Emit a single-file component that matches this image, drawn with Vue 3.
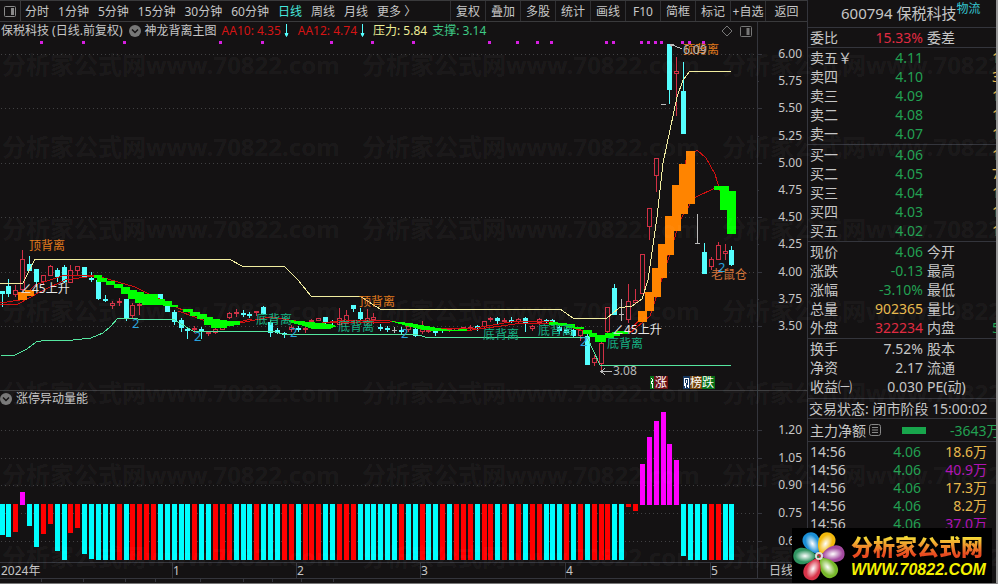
<script setup>
import { ref } from 'vue';

const periods = ['分时', '1分钟', '5分钟', '15分钟', '30分钟', '60分钟', '日线', '周线', '月线', '更多 〉'];
const activePeriod = ref('日线');
const tools = ['复权', '叠加', '多股', '统计', '画线', 'F10', '简框', '标记', '+自选', '返回'];

const sells = [
    ['卖五￥', '4.11', '1'],
    ['卖四', '4.10', '3'],
    ['卖三', '4.09', '1'],
    ['卖二', '4.08', '1'],
    ['卖一', '4.07', '1'],
];
const buys = [
    ['买一', '4.06', '1'],
    ['买二', '4.05', '7'],
    ['买三', '4.04', '1'],
    ['买四', '4.03', '1'],
    ['买五', '4.02', '1'],
];
const quotes = [
    ['现价', '4.06', 'down', '今开', ''],
    ['涨跌', '-0.13', 'down', '最高', ''],
    ['涨幅', '-3.10%', 'down', '最低', ''],
    ['总量', '902365', 'gold', '量比', ''],
    ['外盘', '322234', 'up', '内盘', '5'],
];
const basics = [
    ['换手', '7.52%', '股本'],
    ['净资', '2.17', '流通'],
    ['收益㈠', '0.030', 'PE(动)'],
];
const ticks = [
    ['18.6万', 'gold'],
    ['40.9万', 'purple'],
    ['17.3万', 'gold'],
    ['8.2万', 'gold'],
    ['37.0万', 'purple'],
];

const step = 6.885;
const center = (i) => Math.round(1.6 + i * step);

// index, colour (c = falling, r = rising, g = flat), high, body top, body bottom, low
const candles = [
    [0, 'c', 291, 291, 294, 307], [1, 'c', 279, 286, 294, 297], [2, 'r', 285, 290, 295, 297],
    [3, 'r', 250, 259, 290, 291], [4, 'c', 256, 264, 271, 271], [5, 'c', 269, 269, 282, 287],
    [6, 'r', 275, 275, 282, 284], [7, 'r', 265, 266, 276, 276], [8, 'c', 268, 270, 277, 282],
    [9, 'c', 265, 267, 282, 283], [10, 'r', 265, 270, 283, 283], [11, 'r', 266, 266, 271, 276],
    [12, 'c', 267, 267, 278, 278], [13, 'c', 272, 278, 280, 282], [14, 'c', 280, 280, 299, 300],
    [15, 'c', 295, 299, 301, 302], [16, 'r', 301, 303, 306, 309], [17, 'r', 298, 301, 303, 306],
    [18, 'c', 299, 299, 319, 321], [19, 'r', 303, 305, 316, 318], [20, 'r', 302, 304, 306, 315],
    [23, 'c', 294, 294, 300, 300], [24, 'c', 303, 304, 312, 312], [25, 'c', 310, 312, 322, 325],
    [26, 'c', 318, 320, 328, 332], [27, 'c', 328, 329, 331, 339], [28, 'r', 326, 328, 330, 333],
    [29, 'c', 327, 329, 331, 339], [30, 'r', 331, 332, 334, 336], [31, 'r', 327, 329, 333, 334],
    [32, 'r', 325, 326, 330, 330], [33, 'r', 312, 313, 318, 319], [34, 'r', 309, 312, 314, 317],
    [35, 'c', 310, 313, 315, 317], [36, 'c', 312, 314, 316, 318], [37, 'r', 311, 311, 313, 316],
    [38, 'c', 306, 307, 314, 315], [39, 'c', 320, 322, 333, 337], [40, 'c', 328, 330, 333, 334],
    [41, 'c', 332, 333, 335, 338], [42, 'r', 325, 327, 330, 332], [43, 'c', 326, 328, 330, 332],
    [44, 'r', 327, 328, 330, 333], [45, 'r', 319, 320, 322, 323], [46, 'r', 318, 318, 321, 321],
    [47, 'c', 317, 317, 322, 325], [48, 'c', 320, 321, 323, 325], [49, 'r', 308, 318, 325, 325],
    [50, 'r', 310, 315, 324, 324], [51, 'c', 305, 305, 309, 312], [52, 'c', 308, 312, 319, 320],
    [53, 'r', 309, 318, 323, 325], [54, 'r', 313, 317, 320, 324], [55, 'c', 324, 327, 329, 331],
    [56, 'c', 326, 328, 330, 332], [57, 'g', 327, 330, 331, 333], [58, 'c', 327, 330, 332, 335],
    [59, 'r', 324, 326, 330, 332], [60, 'c', 328, 329, 336, 337], [61, 'r', 321, 328, 332, 334],
    [62, 'r', 329, 330, 332, 333], [63, 'c', 328, 331, 333, 336], [64, 'c', 328, 329, 331, 333],
    [65, 'r', 329, 329, 331, 332], [66, 'r', 328, 328, 331, 331], [67, 'r', 327, 327, 330, 330],
    [68, 'r', 325, 327, 329, 330], [69, 'c', 325, 326, 328, 331], [70, 'r', 321, 321, 327, 329],
    [71, 'r', 317, 318, 320, 322], [72, 'c', 317, 318, 321, 325], [73, 'r', 318, 320, 322, 323],
    [74, 'c', 317, 320, 322, 323], [75, 'r', 318, 319, 322, 323], [76, 'c', 317, 318, 324, 332],
    [77, 'r', 325, 326, 329, 331], [78, 'r', 318, 319, 323, 325], [79, 'c', 319, 320, 321, 323],
    [80, 'c', 319, 320, 323, 325], [81, 'c', 326, 327, 331, 334], [82, 'c', 327, 329, 333, 335],
    [83, 'c', 329, 330, 336, 337], [84, 'r', 329, 330, 336, 341], [85, 'c', 334, 336, 365, 365],
    [86, 'r', 355, 358, 363, 366], [87, 'r', 342, 343, 364, 371], [88, 'r', 307, 307, 332, 334],
    [89, 'c', 284, 288, 315, 315], [90, 'g', 299, 314, 315, 321], [91, 'r', 284, 301, 320, 323],
    [92, 'r', 289, 300, 303, 304], [93, 'r', 254, 254, 294, 294], [94, 'r', 208, 208, 227, 240],
    [95, 'r', 158, 158, 176, 192], [96, 'g', 104, 104, 105, 105], [97, 'c', 44, 44, 90, 104],
    [98, 'r', 57, 71, 74, 116], [99, 'c', 62, 91, 134, 134], [101, 'g', 214, 243, 244, 244],
    [102, 'c', 243, 252, 274, 274], [103, 'r', 257, 259, 267, 270], [104, 'r', 242, 245, 260, 260],
    [105, 'r', 244, 251, 254, 260], [106, 'c', 246, 250, 265, 266],
].map(([i, type, high, top, bottom, low]) => ({ x: center(i), type, high, top, bottom, low }));

// x, y, width, height
const falling = [
    [94, 275, 8, 3], [97, 278, 10, 4], [106, 281, 9, 4], [114, 284, 9, 4], [121, 287, 9, 7],
    [128, 290, 9, 9], [135, 292, 9, 11], [142, 294, 16, 11], [155, 299, 10, 6], [163, 301, 9, 5],
    [170, 305, 8, 2], [183, 309, 10, 3], [190, 312, 10, 4], [197, 314, 10, 5], [204, 317, 9, 8],
    [211, 319, 9, 9], [218, 320, 9, 8], [225, 321, 9, 5], [232, 321, 8, 4],
    [549, 322, 9, 3], [558, 323, 9, 3], [566, 324, 9, 4], [574, 327, 10, 2], [583, 330, 9, 4],
    [589, 333, 8, 4], [595, 335, 11, 7], [605, 333, 9, 5], [612, 332, 8, 4], [617, 331, 11, 3],
    [714, 186, 15, 4], [720, 186, 9, 24], [727, 191, 9, 43],
];
const rising = [
    [18, 292, 9, 8], [25, 290, 9, 6], [638, 311, 9, 11], [645, 292, 9, 19], [652, 268, 9, 29],
    [658, 244, 9, 34], [665, 216, 9, 39], [672, 185, 9, 46], [679, 164, 9, 50], [686, 151, 9, 53],
];

const dots = [41, 83, 124, 220, 262, 331, 372, 413, 489, 517, 537, 551, 606, 613, 641, 648, 655, 661, 682, 689, 703];
const prices = ['6.00', '5.75', '5.50', '5.25', '5.00', '4.75', '4.50', '4.25', '4.00', '3.75', '3.50']
    .map((label, i) => ({ label, y: Math.round(54 + i * 27.2), major: i % 2 === 0 }));
const levels = [['1.20', 430], ['1.05', 458], ['0.90', 485], ['0.75', 513], ['0.60', 541]];

const marks = [
    ['顶背离', 29, 250, 'top'], ['顶背离', 359, 306, 'top'], ['顶背离', 683, 54, 'top'],
    ['底背离', 256, 324, 'low'], ['底背离', 338, 331, 'low'], ['底背离', 483, 339, 'low'],
    ['底背离', 538, 335, 'low'], ['底背离', 607, 348, 'low'], ['老鼠仓', 711, 279, 'rat'],
    ['∠45上升', 20, 293, 'rise'], ['∠45上升', 612, 334, 'rise'],
    ['2', 132, 328, 'two'], ['2', 194, 341, 'two'], ['2', 290, 337, 'two'],
    ['2', 401, 338, 'two'], ['2', 580, 346, 'two'], ['2', 718, 272, 'two'],
    ['6.09', 683, 54, 'grey'], ['3.08', 613, 375, 'grey'],
];

const pattern = 'ccrmccrrccrrcccccrcrrrrcccccrccrrrcccrcccrrcrrrc'
    + 'crrrccccccrccrccrcrrrcrrcrcrcrrcccrcrcrrrccrrmmmmmmccccrrcc';
const heights = {
    0: 31, 1: 33, 2: 28, 4: 22, 5: 43, 6: 30, 7: 20, 8: 47, 10: 29, 11: 24, 12: 50, 13: 55,
    91: 3, 92: 7, 99: 52,
};
const peaks = { 3: 492, 93: 464, 94: 437, 95: 421, 96: 412, 97: 444, 98: 460 };
const bars = [...pattern].map((type, i) => {
    const y = peaks[i] ?? 504;
    return { x: center(i) - 2, y, height: peaks[i] ? 505 - y : heights[i] ?? 56, type };
});

const months = [['1', 173], ['2', 297], ['3', 421], ['4', 566], ['5', 711]];
const petals = [
    [-28, '#1b8fd6'], [28, '#f2b90c'], [82, '#a44aa0'], [142, '#77b82a'], [205, '#d83349'], [270, '#2f9460'],
];
</script>

<template>
    <div class="page">
        <main class="chart">
            <nav class="toolbar">
                <button class="layout-button" aria-label="布局">
                    <svg viewBox="0 0 12 11" width="12" height="11">
                        <rect x="0.5" y="0.5" width="11" height="10" rx="1" fill="none" stroke="#8a8a8a" />
                        <rect x="7" y="2" width="3" height="7" fill="#8a8a8a" />
                    </svg>
                </button>
                <div class="periods">
                    <button
                        v-for="period in periods"
                        :key="period"
                        :class="{ active: period === activePeriod }"
                        @click="activePeriod = period"
                    >{{ period }}</button>
                </div>
                <div class="tools">
                    <button v-for="tool in tools" :key="tool">{{ tool }}</button>
                </div>
            </nav>

            <header class="legend">
                <span>保税科技 (日线.前复权)</span>
                <svg class="chevron" viewBox="0 0 12 12" width="12" height="12">
                    <circle cx="6" cy="6" r="6" fill="#777" />
                    <path d="M3 4.5l3 3 3-3" fill="none" stroke="#151314" stroke-width="1.5" />
                </svg>
                <span>神龙背离主图</span>
                <span class="average">AA10: 4.35<svg viewBox="0 0 5 13" width="5" height="13"><path d="M2.5 0v10M1 9.5h3l-1.5 3z" fill="#5ff" stroke="#5ff" /></svg></span>
                <span class="average second">AA12: 4.74<svg viewBox="0 0 5 13" width="5" height="13"><path d="M2.5 0v10M1 9.5h3l-1.5 3z" fill="#5ff" stroke="#5ff" /></svg></span>
                <span class="pressure">压力: 5.84</span>
                <span class="support">支撑: 3.14</span>
                <div class="legend-icons">
                    <svg viewBox="0 0 32 12" width="32" height="12" fill="none" stroke="#777">
                        <path d="M6 1l5 5-5 5-5-5z" />
                        <rect x="19.5" y="1.5" width="11" height="10" rx="1" />
                        <path d="M27 3v7" stroke-width="3" />
                    </svg>
                </div>
                <div class="axis-gap"></div>
            </header>

            <svg class="plot" viewBox="0 39 807 351">
                <g class="grid">
                    <template v-for="price in prices" :key="price.label">
                        <line v-if="price.major" class="dotted" x1="1" x2="757" :y1="price.y + 0.5" :y2="price.y + 0.5" />
                        <line x1="757" :x2="price.major ? 762 : 759" :y1="price.y + 0.5" :y2="price.y + 0.5" />
                        <text class="axis" x="802" :y="price.y + 4">{{ price.label }}</text>
                    </template>
                    <line x1="757.5" x2="757.5" y1="39" y2="391" />
                </g>
                <rect v-for="x in dots" :key="x" :x="x - 1" y="41" width="3" height="3" fill="#d61fe0" />

                <g class="candles">
                    <g v-for="candle in candles" :key="candle.x" :class="candle.type">
                        <line :x1="candle.x + 0.5" :x2="candle.x + 0.5" :y1="candle.high" :y2="candle.top" />
                        <line :x1="candle.x + 0.5" :x2="candle.x + 0.5" :y1="candle.bottom" :y2="candle.low" />
                        <rect
                            v-if="candle.type === 'r'"
                            :x="candle.x - 1.5"
                            :y="candle.top + 0.5"
                            width="4"
                            :height="Math.max(candle.bottom - candle.top - 1, 1)"
                        />
                        <rect v-else :x="candle.x - 2" :y="candle.top" width="5" :height="candle.bottom - candle.top" />
                    </g>
                </g>

                <g class="curves">
                    <path class="yellow" d="M0 283H23L35 259H229L242 266H284L298 280L311 296H360L372 304L380 309H560L573 318H607L619 308L632 306L642 299L648 280L657 217L663 163L670 130L677 97L683 80L690 71H731" />
                    <path class="mint" d="M1 355H15L27 349L36 342L41 341L73 340L91 338L103 333L110 327L118 318H133L138 319H173L193 331H272L283 334H415L425 337H587L600 365H731" />
                    <path class="red" d="M0 303L20 300L35 285L65 275L94 275L135 287L178 308L215 323L240 323L270 317L315 324L345 320L390 321L430 328L470 329L510 322L550 321L583 331L597 338L627 332L645 315L661 280L675 225L686 160L697 150L706 158L715 174L725 208" />
                    <path class="red" d="M0 304L18 304L40 292L65 280L94 276M178 311L220 326L252 319M330 322L390 322M465 331L515 324L552 323M630 333L650 316L665 270L680 220L694 198L715 188" />
                </g>

                <g fill="#0f0">
                    <rect v-for="([x, y, width, height], i) in falling" :key="i" :x="x" :y="y" :width="width" :height="height" />
                    <path d="M289 320L310 322L330 324L337 326L330 329H312L300 325L289 322zM390 321L410 323L438 328L450 330L467 329V331H437L423 330L407 326z" />
                </g>
                <g fill="#ff8400">
                    <rect v-for="([x, y, width, height], i) in rising" :key="i" :x="x" :y="y" :width="width" :height="height" />
                </g>

                <path d="M682 49L670 44M674 44L670 44L672 47M612 371.5H601M605 368L601 371.5L605 375" fill="none" stroke="#bbb" />
                <text v-for="([label, x, y, kind], i) in marks" :key="i" :class="['mark', kind]" :x="x" :y="y">{{ label }}</text>

                <rect x="650" y="376" width="4" height="13" fill="#087018" />
                <rect x="654" y="376" width="14" height="13" fill="#6b1014" />
                <path d="M651 378l2 2-2 3 2 1-1 4" fill="none" stroke="#fff" />
                <text class="badge" x="655" y="387">涨</text>
                <rect x="683" y="376" width="7" height="13" fill="#163760" />
                <rect x="690" y="376" width="12" height="13" fill="#76430b" />
                <rect x="702" y="376" width="13" height="13" fill="#087018" />
                <path d="M684.5 386V378H688.5V386M686.5 380L685 388M687 385l2 3" fill="none" stroke="#fff" />
                <text class="badge" x="690" y="387">榜跌</text>
            </svg>

            <header class="legend volume-legend">
                <svg class="chevron" viewBox="0 0 12 12" width="12" height="12">
                    <circle cx="6" cy="6" r="6" fill="#777" />
                    <path d="M3 4.5l3 3 3-3" fill="none" stroke="#151314" stroke-width="1.5" />
                </svg>
                <span>涨停异动量能</span>
                <div class="axis-gap"></div>
            </header>

            <svg class="plot" viewBox="0 406 807 156">
                <g class="grid">
                    <template v-for="[label, y] in levels" :key="label">
                        <line class="dotted" x1="1" x2="757" :y1="y + 0.5" :y2="y + 0.5" />
                        <line x1="757" x2="762" :y1="y + 0.5" :y2="y + 0.5" />
                        <text class="axis" x="802" :y="y + 4">{{ label }}</text>
                    </template>
                    <line x1="757.5" x2="757.5" y1="406" y2="562" />
                </g>
                <rect v-for="bar in bars" :key="bar.x" :class="['bar', bar.type]" :x="bar.x" :y="bar.y" width="5" :height="bar.height" />
            </svg>

            <svg class="plot" viewBox="0 562 807 21">
                <g class="grid">
                    <line x1="0" x2="807" y1="562.5" y2="562.5" />
                    <line x1="0" x2="807" y1="578.5" y2="578.5" />
                    <line x1="757.5" x2="757.5" y1="562" y2="579" />
                    <line v-for="x in [41, 83, 125, 155, 200, 243, 272, 301, 333]" :key="x" :x1="x" :x2="x" y1="579" y2="582" />
                    <line v-for="[label, x] in months" :key="label" :x1="x - 0.5" :x2="x - 0.5" y1="562" y2="579" />
                </g>
                <text class="month" x="1" y="575">2024年</text>
                <text v-for="[label, x] in months" :key="label" class="month" :x="x" :y="575">{{ label }}</text>
                <text class="month" x="769" y="575">日线</text>
            </svg>
        </main>

        <aside class="side">
            <h1>600794 保税科技<small>物流</small></h1>
            <section class="group single">
                <div class="row"><span>委比</span><span class="value up">15.33%</span><span>委差</span></div>
            </section>
            <section v-for="(orders, i) in [sells, buys]" :key="i" class="group">
                <div v-for="[label, price, amount] in orders" :key="label" class="row">
                    <span>{{ label }}</span><span class="value down">{{ price }}</span><span></span>
                    <span class="edge gold">{{ amount }}</span>
                </div>
            </section>
            <section class="group">
                <div v-for="[label, value, tone, other, rest] in quotes" :key="label" class="row">
                    <span>{{ label }}</span><span class="value" :class="tone">{{ value }}</span><span>{{ other }}</span>
                    <span class="edge down">{{ rest }}</span>
                </div>
            </section>
            <section class="group basics">
                <div v-for="[label, value, other] in basics" :key="label" class="row">
                    <span>{{ label }}</span><span class="value">{{ value }}</span><span>{{ other }}</span>
                </div>
            </section>
            <p class="status">交易状态: 闭市阶段 15:00:02</p>
            <div class="flow">
                <span>主力净额</span>
                <svg viewBox="0 0 12 12" width="12" height="12" fill="none" stroke="#888">
                    <rect x="0.5" y="0.5" width="11" height="11" rx="2" />
                    <path d="M3 3.5h6M3 6h6M3 8.5h6" />
                </svg>
                <i></i>
                <span class="net down">-3643万</span>
            </div>
            <div class="ticks">
                <div v-for="([amount, tone], i) in ticks" :key="i" class="tick">
                    <span>14:56</span><span class="down">4.06</span><span :class="tone">{{ amount }}</span>
                </div>
            </div>
        </aside>

        <div class="watermark" aria-hidden="true">
            <span v-for="n in 21" :key="n">分析家公式网www.70822.com</span>
        </div>

        <a class="brand" href="#">
            <svg viewBox="-27 -27 54 54" width="54" height="54">
                <defs>
                    <radialGradient id="petal">
                        <stop offset="0" stop-color="#fff" />
                        <stop offset="1" stop-color="#fff" stop-opacity="0" />
                    </radialGradient>
                </defs>
                <g v-for="[angle, color] in petals" :key="angle" :transform="`rotate(${angle})`">
                    <path d="M0 -2C-8 -9 -10 -17 -7 -22C-4 -27 4 -27 7 -22C10 -17 8 -9 0 -2z" :fill="color" />
                    <ellipse cx="0" cy="-14" rx="6" ry="10" fill="url(#petal)" />
                </g>
                <circle r="4" fill="#ddd" />
                <circle r="2" fill="#a33" />
                <circle cx="-1" cy="1" r="1" fill="#284" />
            </svg>
            <span class="brand-text">
                <strong>分析家公式网</strong>
                <em>WWW.70822.COM</em>
            </span>
        </a>
    </div>
</template>

<style>
body {
    margin: 0;
    background: #fff;
}
</style>

<style scoped>
.page {
    position: relative;
    display: grid;
    grid-template-columns: minmax(0, 1fr) 189px;
    margin-right: 4px;
    border-right: 2px solid #999;
    border-bottom: 1px solid #777;
    background: #141213;
    color: #c6c6c6;
    font-family: "Noto Sans", "Noto Sans CJK SC", sans-serif;
    font-size: 12px;
    overflow: hidden;
}

button {
    padding: 0;
    border: 0;
    background: none;
    color: inherit;
    font: inherit;
    white-space: nowrap;
    cursor: pointer;
}

.toolbar {
    display: flex;
    height: 20px;
    border-top: 1px solid #3a3a3c;
    border-bottom: 1px solid #3a3a3c;
}

.layout-button {
    display: flex;
    align-items: center;
    justify-content: center;
    width: 21px;
    border-right: 1px solid #3a3a3c;
}

.periods {
    display: flex;
    flex: 1;
    gap: 9px;
    padding-left: 4px;
}

.periods .active {
    color: #45e6dc;
}

.tools {
    display: flex;
}

.tools button {
    width: 35px;
    border-left: 1px solid #303033;
}

.tools button:last-child {
    width: 42px;
}

.legend {
    display: flex;
    align-items: center;
    height: 17px;
    padding-left: 1px;
    line-height: 17px;
    white-space: nowrap;
}

.chevron {
    margin: 0 4px 0 6px;
}

.average {
    display: flex;
    align-items: center;
    gap: 3px;
    margin-left: 5px;
    color: #d41414;
}

.average.second {
    margin-left: 9px;
}

.pressure {
    margin-left: 8px;
    color: #eeee96;
}

.support {
    margin-left: 5px;
    color: #3ec985;
}

.legend-icons {
    display: flex;
    flex: 1;
    justify-content: flex-end;
    padding-right: 4px;
}

.axis-gap {
    align-self: stretch;
    box-sizing: border-box;
    width: 50px;
    border-left: 1px solid #34353c;
}

.volume-legend {
    height: 15px;
    padding-left: 0;
    border-top: 1px solid #3a3a3c;
    line-height: 15px;
}

.volume-legend .chevron {
    margin-left: 0;
}

.volume-legend .axis-gap {
    margin-left: auto;
}

.plot {
    display: block;
    width: 100%;
    height: auto;
    shape-rendering: crispEdges;
}

.grid line {
    stroke: #34353c;
}

.grid .dotted {
    stroke: #414143;
    stroke-dasharray: 1 3;
}

.axis {
    fill: #c6c6c6;
    text-anchor: end;
}

.month {
    fill: #c6c6c6;
}

.candles .c {
    fill: #5ff;
    stroke: #5ff;
}

.candles .c rect,
.candles .g rect {
    stroke: none;
}

.candles .r {
    fill: #141213;
    stroke: #d03045;
}

.candles .g {
    fill: #bbb;
    stroke: #bbb;
}

.curves path {
    fill: none;
}

.curves .yellow {
    stroke: #f2eda0;
}

.curves .mint {
    stroke: #55e6a0;
}

.curves .red {
    stroke: #d01010;
}

.mark.top {
    fill: #e07a1c;
}

.mark.low {
    fill: #16b184;
}

.mark.rat {
    fill: #d4753a;
}

.mark.rise {
    fill: #e8e8e8;
}

.mark.two {
    fill: #2aa3dd;
    font-size: 13px;
}

.mark.grey {
    fill: #b8b8b8;
}

.badge {
    fill: #fff;
}

.bar.c {
    fill: #0ff;
}

.bar.r {
    fill: #f00;
}

.bar.m {
    fill: #f0f;
}

.side {
    border-left: 1px solid #34353c;
    font-size: 14px;
    overflow: hidden;
    white-space: nowrap;
}

.side h1 {
    display: flex;
    box-sizing: border-box;
    height: 28px;
    margin: 0;
    padding-left: 33px;
    border-bottom: 1px solid #34353c;
    font-size: 15px;
    font-weight: 400;
    line-height: 27px;
}

.side h1 small {
    color: #35c5cf;
    font-size: 12px;
    line-height: 18px;
}

.group {
    padding-bottom: 1px;
    border-bottom: 1px solid #34353c;
}

.group.single {
    padding: 0;
}

.basics {
    padding-bottom: 2px;
}

.row {
    display: grid;
    grid-template-columns: 46px 67px 69px 20px;
    height: 19px;
    padding-left: 2px;
    line-height: 19px;
}

.value {
    text-align: right;
}

.row span:nth-child(3) {
    padding-left: 4px;
}

.up {
    color: #e02b42;
}

.down {
    color: #22a052;
}

.gold {
    color: #e8b94c;
}

.purple {
    color: #b012b5;
}

.status {
    height: 19px;
    margin: 0;
    padding-left: 1px;
    border-bottom: 1px solid #34353c;
    line-height: 19px;
}

.flow {
    display: flex;
    align-items: center;
    height: 22px;
    padding-left: 2px;
    border-bottom: 1px solid #34353c;
}

.flow > * {
    flex-shrink: 0;
}

.flow svg {
    margin-left: 3px;
}

.flow i {
    width: 24px;
    height: 7px;
    margin: 0 24px 0 21px;
    background: #18a54c;
}

.ticks {
    padding-top: 1px;
}

.tick {
    display: grid;
    grid-template-columns: 55px 56px 66px;
    height: 18px;
    padding-left: 2px;
    line-height: 18px;
    text-align: right;
}

.tick span:first-child {
    text-align: left;
}

.watermark {
    position: absolute;
    inset: 46px 0 0 2px;
    display: grid;
    grid-template-columns: repeat(3, 360px);
    grid-auto-rows: 82px;
    color: rgba(255, 255, 255, 0.05);
    font-size: 24px;
    font-weight: 700;
    line-height: 38px;
    overflow: hidden;
    pointer-events: none;
    white-space: nowrap;
}

.brand {
    position: absolute;
    right: 4px;
    bottom: 0;
    display: flex;
    align-items: center;
    gap: 5px;
    width: 200px;
    height: 55px;
    background: #000;
    text-decoration: none;
}

.brand-text {
    display: flex;
    flex-direction: column;
}

.brand-text strong {
    background: linear-gradient(#f5df38 20%, #e84a20 80%);
    background-clip: text;
    color: transparent;
    font-family: "Noto Sans CJK SC", sans-serif;
    font-size: 22px;
    font-weight: 900;
    line-height: 29px;
}

.brand-text em {
    color: #f4f000;
    font-family: "Liberation Sans", sans-serif;
    font-size: 16px;
    font-weight: 700;
    line-height: 20px;
}
</style>
